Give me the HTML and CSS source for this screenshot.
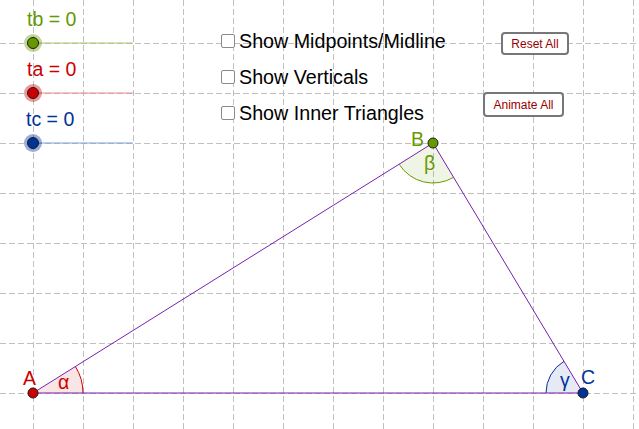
FILE: index.html
```
<!DOCTYPE html>
<html>
<head>
<meta charset="utf-8">
<link rel="stylesheet" href="styles.css">
</head>
<body>
<div class="applet">
  <svg class="canvas" width="639" height="429" viewBox="0 0 639 429" xmlns="http://www.w3.org/2000/svg">
    <g class="grid">
      <line x1="33" y1="0" x2="33" y2="429"/>
      <line x1="83" y1="0" x2="83" y2="429"/>
      <line x1="133" y1="0" x2="133" y2="429"/>
      <line x1="183" y1="0" x2="183" y2="429"/>
      <line x1="233" y1="0" x2="233" y2="429"/>
      <line x1="283" y1="0" x2="283" y2="429"/>
      <line x1="333" y1="0" x2="333" y2="429"/>
      <line x1="383" y1="0" x2="383" y2="429"/>
      <line x1="433" y1="0" x2="433" y2="429"/>
      <line x1="483" y1="0" x2="483" y2="429"/>
      <line x1="533" y1="0" x2="533" y2="429"/>
      <line x1="583" y1="0" x2="583" y2="429"/>
      <line x1="633" y1="0" x2="633" y2="429"/>
      <line x1="0" y1="43" x2="639" y2="43"/>
      <line x1="0" y1="93" x2="639" y2="93"/>
      <line x1="0" y1="143" x2="639" y2="143"/>
      <line x1="0" y1="193" x2="639" y2="193"/>
      <line x1="0" y1="243" x2="639" y2="243"/>
      <line x1="0" y1="293" x2="639" y2="293"/>
      <line x1="0" y1="343" x2="639" y2="343"/>
      <line x1="0" y1="393" x2="639" y2="393"/>
    </g>

    <!-- angle sectors -->
    <path class="sec-a" d="M33 393 L83 393 A50 50 0 0 0 75.4 366.5 Z"/>
    <path class="arc-a" d="M83 393 A50 50 0 0 0 75.4 366.5"/>
    <path class="sec-b" d="M433 143 L399.1 164.2 A40 40 0 0 0 453.6 177.3 Z"/>
    <path class="arc-b" d="M399.1 164.2 A40 40 0 0 0 453.6 177.3"/>
    <path class="sec-c" d="M583 393 L546 393 A37 37 0 0 1 564 361.3 Z"/>
    <path class="arc-c" d="M546 393 A37 37 0 0 1 564 361.3"/>

    <!-- triangle -->
    <polygon class="tri" points="33,393 433,143 583,393"/>

    <!-- sliders -->
    <line class="sl-b" x1="33" y1="43" x2="133" y2="43"/>
    <line class="sl-a" x1="33" y1="93" x2="133" y2="93"/>
    <line class="sl-c" x1="33" y1="143" x2="133" y2="143"/>
    <circle class="halo-b" cx="33" cy="43" r="9"/>
    <circle class="pt-b" cx="33" cy="43" r="5.5"/>
    <circle class="halo-a" cx="33" cy="93" r="9"/>
    <circle class="pt-a" cx="33" cy="93" r="5.5"/>
    <circle class="halo-c" cx="33" cy="143" r="9"/>
    <circle class="pt-c" cx="33" cy="143" r="5.5"/>

    <text class="lbl col-b" x="27" y="26">tb = 0</text>
    <text class="lbl col-a" x="27" y="76">ta = 0</text>
    <text class="lbl col-c" x="26" y="126">tc = 0</text>

    <!-- vertices -->
    <circle class="pt-a" cx="33" cy="393" r="5"/>
    <circle class="pt-b" cx="433" cy="143" r="5"/>
    <circle class="pt-c" cx="583" cy="393" r="5"/>

    <text class="lbl col-a" x="23" y="385">A</text>
    <text class="lbl col-a" x="58" y="389">α</text>
    <text class="lbl col-b" x="411" y="146">B</text>
    <text class="lbl col-b" x="424" y="170">β</text>
    <text class="lbl col-c" x="581" y="384">C</text>
    <text class="lbl col-c" x="560" y="387">γ</text>
  </svg>

  <div class="checks">
    <div class="check"><span class="box"></span><span class="ctext">Show Midpoints/Midline</span></div>
    <div class="check"><span class="box"></span><span class="ctext">Show Verticals</span></div>
    <div class="check"><span class="box"></span><span class="ctext">Show Inner Triangles</span></div>
  </div>

  <div class="btn btn-reset">Reset All</div>
  <div class="btn btn-animate">Animate All</div>
</div>
</body>
</html>
```
FILE: styles.css
```
html, body {
  margin: 0;
  padding: 0;
  background: #ffffff;
}

.applet {
  position: relative;
  width: 639px;
  height: 429px;
  overflow: hidden;
  background: #ffffff;
  font-family: "Liberation Sans", Arial, sans-serif;
}

.canvas {
  position: absolute;
  left: 0;
  top: 0;
  display: block;
}

.grid line {
  stroke: #c0c0c0;
  stroke-width: 1;
  stroke-dasharray: 6 3;
  shape-rendering: crispEdges;
}

.tri {
  fill: none;
  stroke: #7b1fb0;
  stroke-width: 1;
}

.sec-a { fill: #cc0000; fill-opacity: 0.1; stroke: none; }
.sec-b { fill: #669900; fill-opacity: 0.1; stroke: none; }
.sec-c { fill: #003399; fill-opacity: 0.1; stroke: none; }
.arc-a { fill: none; stroke: #cc0000; stroke-width: 1; }
.arc-b { fill: none; stroke: #669900; stroke-width: 1; }
.arc-c { fill: none; stroke: #003399; stroke-width: 1; }

.sl-b { stroke: #a6c873; stroke-width: 1; }
.sl-a { stroke: #ec8c8c; stroke-width: 1; }
.sl-c { stroke: #7f9ddb; stroke-width: 1; }

.halo-b { fill: #669900; fill-opacity: 0.4; }
.halo-a { fill: #cc0000; fill-opacity: 0.4; }
.halo-c { fill: #003399; fill-opacity: 0.4; }

.pt-a { fill: #cc0000; stroke: #1a1a1a; stroke-width: 1; }
.pt-b { fill: #669900; stroke: #1a1a1a; stroke-width: 1; }
.pt-c { fill: #003399; stroke: #1a1a1a; stroke-width: 1; }

.lbl {
  font-family: "Liberation Sans", Arial, sans-serif;
  font-size: 19.5px;
}
.col-a { fill: #cc0000; }
.col-b { fill: #669900; }
.col-c { fill: #003399; }

.checks {
  position: absolute;
  left: 221px;
  top: 31px;
  display: flex;
  flex-direction: column;
  gap: 16px;
}

.check {
  display: flex;
  align-items: flex-start;
  height: 20px;
}

.box {
  box-sizing: border-box;
  width: 14px;
  height: 14px;
  margin-top: 3px;
  margin-right: 4px;
  border: 1.5px solid #8a8a8a;
  border-radius: 2px;
  background: #ffffff;
}

.ctext {
  font-size: 19.7px;
  line-height: 20px;
  color: #000000;
  white-space: nowrap;
}

.btn {
  position: absolute;
  box-sizing: border-box;
  display: flex;
  align-items: center;
  justify-content: center;
  border: 2px solid #777777;
  border-radius: 4px;
  background: #ffffff;
  color: #990000;
  font-size: 12px;
  white-space: nowrap;
}

.btn-reset {
  left: 501px;
  top: 32px;
  width: 68px;
  height: 23px;
}

.btn-animate {
  left: 483px;
  top: 92px;
  width: 81px;
  height: 25px;
}
```
